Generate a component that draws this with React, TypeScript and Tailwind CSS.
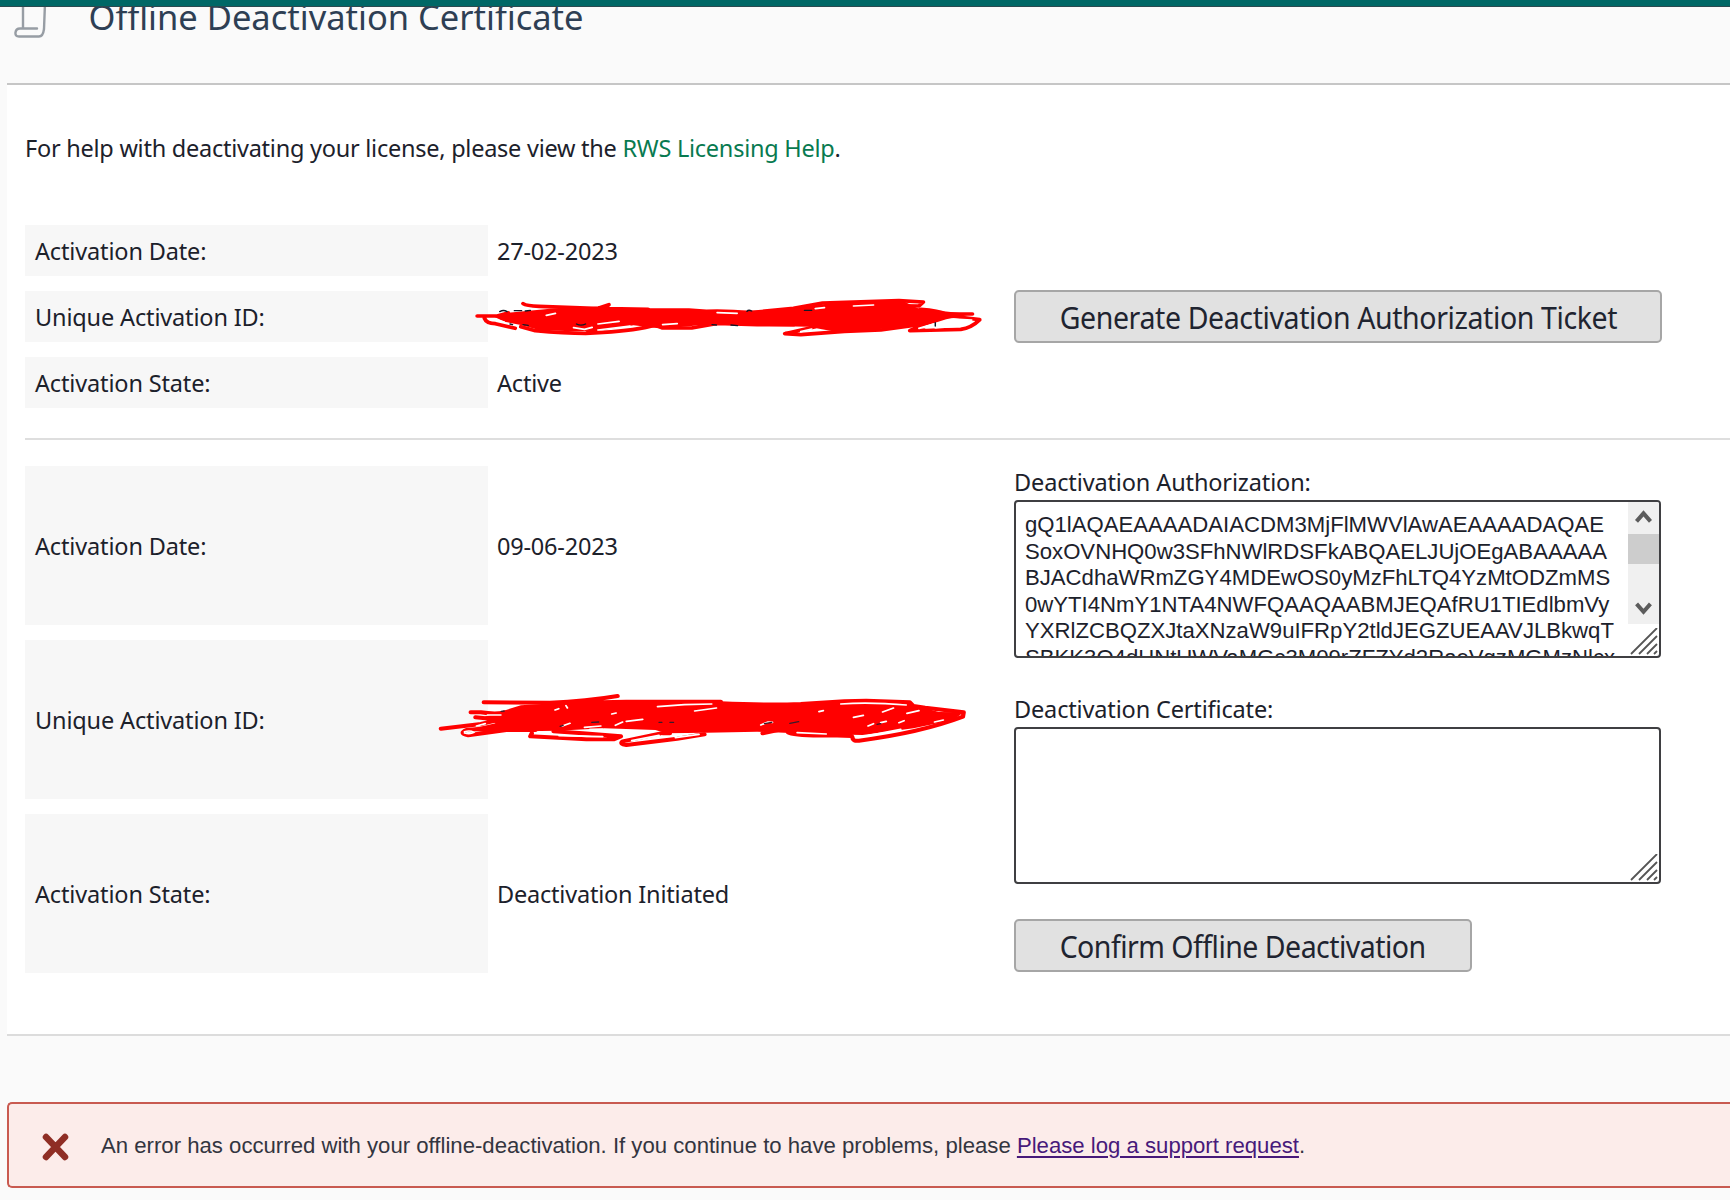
import React from "react";

const AUTH_LINES = [
  "gQ1lAQAEAAAADAIACDM3MjFlMWVlAwAEAAAADAQAE",
  "SoxOVNHQ0w3SFhNWlRDSFkABQAELJUjOEgABAAAAA",
  "BJACdhaWRmZGY4MDEwOS0yMzFhLTQ4YzMtODZmMS",
  "0wYTI4NmY1NTA4NWFQAAQAABMJEQAfRU1TIEdlbmVy",
  "YXRlZCBQZXJtaXNzaW9uIFRpY2tldJEGZUEAAVJLBkwqT",
  "SBKK3Q4dHNtUWVaMGc3M09rZFZYd2RaeVgzMGMzNlcx",
];

function Label({ children }: { children: React.ReactNode }) {
  return <div className="flex items-center bg-[#f7f7f7] pl-[10px] tracking-[-0.15px]">{children}</div>;
}

function Value({ children }: { children?: React.ReactNode }) {
  return <div className="relative flex items-center pl-[9px] tracking-[-0.2px]">{children}</div>;
}

function FormButton({ width, children }: { width: string; children: React.ReactNode }) {
  return (
    <button
      className={
        "flex h-[53px] items-center justify-center whitespace-nowrap rounded-[5px] border-2 border-[#a6a6a6] bg-[#e1e1e1] pt-[3px] font-['Noto_Sans',sans-serif] text-[30px] leading-none text-[#1f2430] " +
        width
      }
    >
      {children}
    </button>
  );
}

function Resizer() {
  return (
    <svg className="absolute right-[1px] bottom-[1px] h-[27px] w-[28px]" viewBox="0 0 28 27" fill="none" stroke="#555" strokeWidth="1.8">
      <path d="M1 26 L27 0M9 26 L27 8M17 26 L27 16M24 26 L27 23" />
    </svg>
  );
}

function ScribbleOne() {
  return (
    <svg className="absolute top-[-11px] left-[-58px] h-[70px] w-[570px]" viewBox="0 0 1568 210" preserveAspectRatio="none" fill="none" strokeLinecap="round" strokeLinejoin="round">
      <path d="M172 108 L215 98 L330 86 L460 80 L590 88 L712 90 L800 94 L900 92 L1010 84 L1110 68 L1300 62 L1340 84 L1400 92 L1490 103 L1420 118 L1370 135 L1230 148 L1120 156 L1040 140 L930 138 L840 132 L740 136 L640 146 L560 136 L460 152 L390 154 L300 150 L250 135 L205 125 Z" fill="#f00" />
      <g stroke="#f00" strokeWidth="11">
        <path d="M130 108 H185 L215 99M150 115 Q155 130 180 131 L234 145" />
        <path d="M256 71 Q265 78 300 79 L450 85 L600 88M465 84 L492 74 L470 90" />
        <path d="M250 140 L290 152 Q370 160 428 160 Q530 156 590 143 L625 134M428 160 L500 128" />
        <path d="M585 118 L640 144 H720 L790 130 L900 134 L1000 134" />
        <path d="M590 90 H712 L760 94 Q820 92 880 98 L1000 85 L1080 69 L1290 62 L1357 66 L1345 78 L1240 77 L1130 86" />
        <path d="M1060 140 L976 161 L1020 164 L1140 154 L1240 150 L1360 132" />
        <path d="M1350 88 Q1400 92 1418 102 H1492M1380 108 L1430 108 L1512 119 Q1490 143 1460 148 L1320 152 L1375 125" />
      </g>
      <path d="M180 119 L204 126M345 100 L320 106M395 143 L425 148 L446 142M462 150 L550 138M462 132 L520 124M640 134 L680 131M790 98 L845 100M1020 155 L1050 147M1165 78 L1220 75M1060 86 L1085 83M1345 145 L1385 132 L1405 134M1440 117 L1490 120 L1460 138 L1390 144" stroke="#fff" strokeWidth="5" />
      <path d="M1400 132 L1485 122 L1462 140 L1358 146 Z" fill="#fff" />
      <path d="M192 95 Q202 88 212 95M232 92 H252M262 93 L276 91M403 132 Q415 139 428 132M872 94 Q876 88 885 93M776 134 L788 135M828 135 L846 137M1390 128 V138M220 132 L227 134M256 134 L270 136M1030 91 H1050" stroke="#111827" strokeWidth="4" />
    </svg>
  );
}

function ScribbleTwo() {
  return (
    <svg className="absolute top-[40px] left-[-58px] h-[80px] w-[570px]" viewBox="0 0 1568 240" preserveAspectRatio="none" fill="none" strokeLinecap="round" strokeLinejoin="round">
      <path d="M150 110 L250 76 L400 66 L600 66 L795 68 L960 76 L1150 66 L1320 72 L1400 96 L1468 97 L1440 120 L1330 145 L1190 165 L1050 162 L900 155 L760 158 L650 160 L620 150 L480 145 L350 152 L150 156 L100 150 L180 130 Z" fill="#f00" />
      <g stroke="#f00" strokeWidth="12">
        <path d="M30 146 L140 132 L180 122M125 112 L180 118M112 97 H140 Q200 108 250 85M148 67 L330 68 Q430 64 516 48M400 68 L540 65 H800 L780 78" />
        <path d="M800 70 Q930 76 1020 72 L1140 64 L1200 62 L1320 67 L1330 78 L1362 83 L1468 97 L1466 110 Q1350 158 1180 182 Q1162 184 1162 172" />
        <path d="M160 145 L100 150 Q78 160 105 166 L210 150 L290 150M280 160 L276 169 L430 178 L505 178 L525 169 L420 160 L340 154" />
        <path d="M635 160 L530 184 Q520 192 540 195 L680 176 L755 163M640 160 H660M915 160 L980 145M985 157 Q1000 168 1100 166 L1160 168" />
      </g>
      <path d="M95 155 Q110 150 121 157 Q110 164 95 159M158 105 H195M128 138 L152 131M626 80 L700 74 L775 72M728 93 L788 84M425 142 L470 138M440 148 L474 148M364 138 L385 130M500 102 L512 99M510 136 L530 126M540 124 L585 118M374 77 L378 84M344 90 L354 86M910 135 L930 126 L942 127M1070 95 L1082 92M1130 72 Q1210 66 1310 75M1165 112 L1192 106M1245 96 L1275 84M1205 138 L1220 131M1240 128 L1255 124M1290 128 L1304 122M1312 100 L1345 92M1388 126 L1412 120M1205 167 L1295 148M1010 158 L1090 162M555 182 L630 166M675 173 L740 163M355 167 L475 170" stroke="#fff" strokeWidth="5" />
      <path d="M196 94 L204 93M445 127 L464 126M990 130 L1014 125M920 131 L940 127M358 139 L366 136M630 127 H638M660 127 H670M1230 133 L1240 131" stroke="#3b1a2a" strokeWidth="4" />
    </svg>
  );
}

export default function App() {
  return (
    <div className="flex h-[1200px] w-[1730px] flex-col overflow-hidden bg-[#fafafa] font-['Noto_Sans',sans-serif] text-[23.5px] leading-[32px] text-[#1c212b]">
      <div className="h-[7px] shrink-0 border-b border-[#2b4a50] bg-[#006866]" />

      <header className="ml-[7px] flex h-[78px] shrink-0 overflow-hidden border-b-2 border-[#c6c6c6]">
        <svg className="ml-[7px] h-[32px] w-[34px] shrink-0" viewBox="0 0 34 32" fill="none" stroke="#979da4" strokeWidth="2.4" strokeLinejoin="round" strokeLinecap="round">
          <path d="M9 -4 V21M31 -4 L30 22 Q29 29.500 25 29.500 H5 Q1 29.500 1.500 25.500 Q2 21.500 6 21.500 H23" />
        </svg>
        <h1 className="mt-[-14px] ml-[40.5px] whitespace-nowrap text-[34.5px] leading-[48px] text-[#2e3f54]">
          Offline Deactivation Certificate
        </h1>
      </header>

      <main className="ml-[7px] flex h-[951px] shrink-0 flex-col border-b-2 border-[#dcdcdc] bg-white pl-[18px]">
        <p className="mt-[47px] mb-[1px] whitespace-nowrap tracking-[-0.25px]">
          For help with deactivating your license, please view the <a className="text-[#087a50]">RWS Licensing Help</a>.
        </p>

        <section className="mt-[60px] grid grid-cols-[463px_526px_1fr] grid-rows-[51px_51px_51px] gap-y-[15px]">
          <Label>Activation Date:</Label>
          <Value>27-02-2023</Value>
          <div />
          <Label>Unique Activation ID:</Label>
          <Value>
            <ScribbleOne />
          </Value>
          <div className="mt-[-1px]">
            <FormButton width="w-[648px]">
              <span className="scale-x-[0.95] tracking-[-0.41px]">Generate Deactivation Authorization Ticket</span>
            </FormButton>
          </div>
          <Label>Activation State:</Label>
          <Value>Active</Value>
          <div />
        </section>

        <hr className="mt-[30px] border-0 border-t-2 border-[#dedede]" />

        <section className="mt-[26px] grid grid-cols-[989px_1fr]">
          <div className="grid grid-cols-[463px_526px] grid-rows-[159px_159px_159px] gap-y-[15px]">
            <Label>Activation Date:</Label>
            <Value>09-06-2023</Value>
            <Label>Unique Activation ID:</Label>
            <Value>
              <ScribbleTwo />
            </Value>
            <Label>Activation State:</Label>
            <Value>Deactivation Initiated</Value>
          </div>
          <div className="flex flex-col">
            <label className="h-[34px] tracking-[-0.13px]">Deactivation Authorization:</label>
            <div className="relative h-[158px] w-[647px] overflow-hidden rounded-[4px] border-2 border-[#3f3f42] bg-white pt-[10px] pl-[9px] font-['Liberation_Sans',Arial,sans-serif] text-[22.15px] leading-[26.5px]">
              {AUTH_LINES.map((line) => (
                <div key={line} className="whitespace-nowrap">
                  {line}
                </div>
              ))}
              <div className="absolute top-0 right-0 flex h-[122px] w-[31px] flex-col bg-[#f0f0f0]">
                <svg className="h-[32px] w-[31px]" viewBox="0 0 31 31" fill="none" stroke="#5c5c5c" strokeWidth="4">
                  <path d="M8.5 19 L15.5 11 L22.5 19" />
                </svg>
                <div className="h-[31px] bg-[#cdcdcd]" />
                <svg className="mt-[29px] h-[31px] w-[31px]" viewBox="0 0 31 31" fill="none" stroke="#5c5c5c" strokeWidth="4">
                  <path d="M8.5 11 L15.5 19 L22.5 11" />
                </svg>
              </div>
              <Resizer />
            </div>
            <label className="mt-[35px] h-[34px] tracking-[-0.15px]">Deactivation Certificate:</label>
            <div className="relative h-[157px] w-[647px] rounded-[4px] border-2 border-[#3f3f42] bg-white">
              <Resizer />
            </div>
            <div className="mt-[35px]">
              <FormButton width="w-[458px]">
                <span className="scale-x-[0.95] tracking-[-0.55px]">Confirm Offline Deactivation</span>
              </FormButton>
            </div>
          </div>
        </section>
      </main>

      <div className="mt-[66px] ml-[7px] flex h-[86px] shrink-0 items-center rounded-l-[5px] border-2 border-r-0 border-[#c95a50] bg-[#fcecea] font-['Liberation_Sans',Arial,sans-serif] text-[22.17px] text-[#33353f]">
        <svg className="mt-[3px] ml-[32px] h-[30px] w-[29px]" viewBox="0 0 29 30" fill="none" stroke="#8f2e25" strokeWidth="6.5" strokeLinecap="round">
          <path d="M5 5 L24 25M24 5 L5 25" />
        </svg>
        <p className="mt-[1px] ml-[31px] whitespace-nowrap">
          An error has occurred with your offline-deactivation. If you continue to have problems, please{" "}
          <a className="text-[#47197a] underline decoration-2 underline-offset-[3px]">Please log a support request</a>.
        </p>
      </div>
    </div>
  );
}
